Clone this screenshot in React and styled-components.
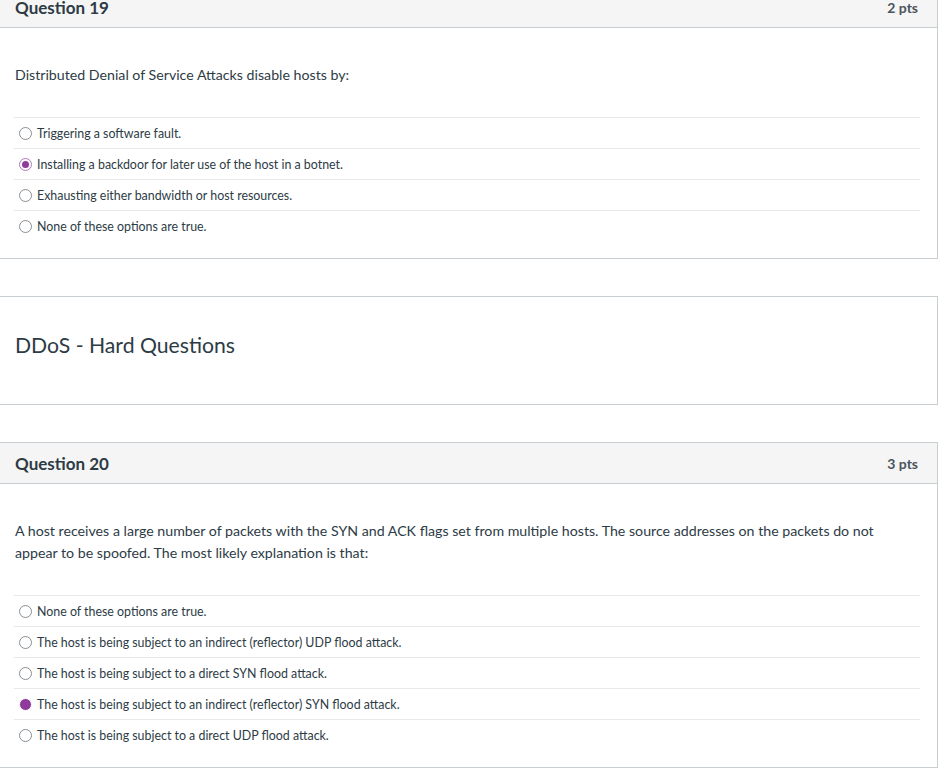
import React from "react";
import styled, {createGlobalStyle} from "styled-components";

const GlobalStyle = createGlobalStyle`
  body {
    margin: 0;
    background: #ffffff;
    font-family: Lato, "Open Sans", sans-serif;
    color: #2d3b45;
  }
`

const Page = styled.div`
  display: flex;
  flex-direction: column;
  gap: 37px;
  margin-top: -14px;
  padding-bottom: 20px;
`

const Card = styled.div`
  box-sizing: border-box;
  width: 939px;
  margin-left: -1px;
  border: 1px solid #c7cdd1;
  background: #ffffff;
`

const Header = styled.div`
  display: flex;
  align-items: center;
  justify-content: space-between;
  height: 40px;
  padding: 0 19px 0 15px;
  background: #f5f5f5;
  border-bottom: 1px solid #c7cdd1;
`

const Title = styled.div`
  font-size: 17px;
  font-weight: 700;
  color: #2d3b45;
`

const Points = styled.div`
  font-size: 14px;
  font-weight: 700;
  color: #4b545b;
`

const Body = styled.div`
  padding: 36px 17px 17px 14px;
`

const QuestionText = styled.p`
  margin: 0 0 31px 1px;
  font-size: 14.2px;
  line-height: 22px;
  color: #2d3b45;
`

const Answers = styled.ul`
  list-style: none;
  margin: 0;
  padding: 0;
`

const Answer = styled.li`
  display: flex;
  align-items: center;
  height: 30px;
  border-top: 1px solid #e6e8ea;
  font-size: 12.4px;
  color: #2d3b45;
`

const Radio = styled.span`
  box-sizing: border-box;
  display: flex;
  align-items: center;
  justify-content: center;
  width: 13px;
  height: 13px;
  margin: 0 5px 0 5px;
  border-radius: 50%;
  border: 1px solid ${p => p.$mark === "ring" ? "#b07bb9" : p.$mark === "dot" ? "#ffffff" : "#8a8f94"};
  background: ${p => p.$mark === "dot" ? "#8e3b9c" : "#ffffff"};
  flex-shrink: 0;

  &::after {
    content: "";
    display: ${p => p.$mark === "ring" ? "block" : "none"};
    width: 7px;
    height: 7px;
    border-radius: 50%;
    background: #8e3b9c;
  }
`

const SectionTitle = styled.div`
  padding: 33px 15px 44px;
  font-size: 21.2px;
  line-height: 30px;
  color: #2d3b45;
`

const Question = ({title, points, text, answers}) => (
    <Card>
        <Header>
            <Title>{title}</Title>
            <Points>{points}</Points>
        </Header>
        <Body>
            <QuestionText>{text}</QuestionText>
            <Answers>
                {answers.map(a =>
                    <Answer key={a.label}>
                        <Radio $mark={a.mark}/>
                        {a.label}
                    </Answer>
                )}
            </Answers>
        </Body>
    </Card>
);

const App = () => {
    return (
        <>
            <GlobalStyle/>
            <Page>
                <Question
                    title="Question 19"
                    points="2 pts"
                    text="Distributed Denial of Service Attacks disable hosts by:"
                    answers={[
                        {label: "Triggering a software fault."},
                        {label: "Installing a backdoor for later use of the host in a botnet.", mark: "ring"},
                        {label: "Exhausting either bandwidth or host resources."},
                        {label: "None of these options are true."},
                    ]}
                />
                <Card>
                    <SectionTitle>DDoS - Hard Questions</SectionTitle>
                </Card>
                <Question
                    title="Question 20"
                    points="3 pts"
                    text={<>A host receives a large number of packets with the SYN and ACK flags set from multiple hosts. The source addresses on the packets do not<br/>appear to be spoofed. The most likely explanation is that:</>}
                    answers={[
                        {label: "None of these options are true."},
                        {label: "The host is being subject to an indirect (reflector) UDP flood attack."},
                        {label: "The host is being subject to a direct SYN flood attack."},
                        {label: "The host is being subject to an indirect (reflector) SYN flood attack.", mark: "dot"},
                        {label: "The host is being subject to a direct UDP flood attack."},
                    ]}
                />
            </Page>
        </>
    );
}

export default App;
